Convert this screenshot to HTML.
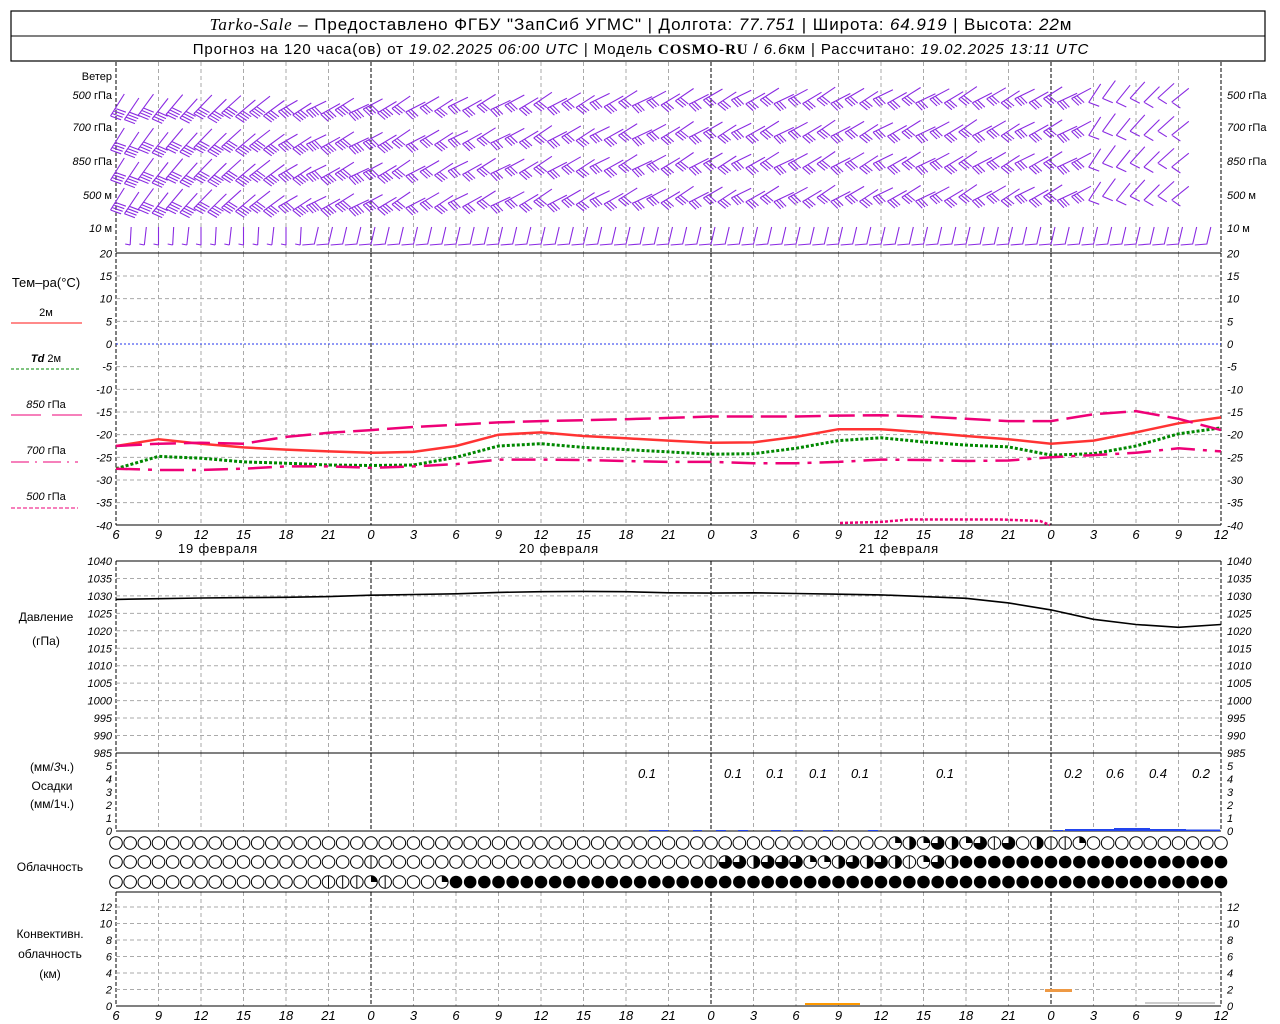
<!DOCTYPE html>
<html><head><meta charset="utf-8"><style>
html,body{margin:0;padding:0;background:#fff;width:1280px;height:1024px;overflow:hidden}
svg{display:block}
text{font-family:"Liberation Sans",sans-serif;fill:#000}
.n{font-style:italic;font-size:11px}
.l{font-size:11px}
</style></head><body>
<svg id="s" width="1280" height="1024" xmlns="http://www.w3.org/2000/svg">
<rect x="11" y="11" width="1254" height="50" fill="none" stroke="#000" stroke-width="1.2"/>
<line x1="11" y1="36" x2="1265" y2="36" stroke="#000"/>
<text x="641" y="30" text-anchor="middle" style="font-size:17px;letter-spacing:0.9px"><tspan style="font-family:'Liberation Serif',serif;font-style:italic">Tarko-Sale</tspan> – Предоставлено ФГБУ "ЗапСиб УГМС" | Долгота: <tspan font-style="italic">77.751</tspan> | Широта: <tspan font-style="italic">64.919</tspan> | Высота: <tspan font-style="italic">22</tspan>м</text>
<text x="641" y="54" text-anchor="middle" style="font-size:15px;letter-spacing:0.9px">Прогноз на 120 часа(ов) от <tspan font-style="italic">19.02.2025 06:00 UTC</tspan>  | Модель <tspan style="font-family:'Liberation Serif',serif;font-weight:bold">COSMO-RU</tspan> / <tspan font-style="italic">6.6</tspan>км | Рассчитано: <tspan font-style="italic">19.02.2025 13:11 UTC</tspan></text>
<g id="g"></g>
</svg>
<script>
var S=document.getElementById('g'),h='';
var X0=116,PX=14.1667,XR=1221;
function X(i){return X0+i*PX}
function ln(a,b,c,d,st){h+='<line x1="'+a+'" y1="'+b+'" x2="'+c+'" y2="'+d+'" '+st+'/>'}
function tx(x,y,t,c,a){h+='<text x="'+x+'" y="'+y+'" class="'+(c||'n')+'"'+(a?' text-anchor="'+a+'"':'')+'>'+t+'</text>'}
var G='stroke="#aaa" stroke-dasharray="4,3"',K='stroke="#000" stroke-dasharray="4,2"';
function vgrid(y1,y2){for(var i=3;i<78;i+=3){var x=X(i);var day=(i==18||i==42||i==66);ln(x,y1,x,y2,day?K:G)}
 ln(X0,y1,X0,y2,K);ln(XR,y1,XR,y2,K)}
vgrid(62,253);vgrid(253,525);vgrid(561,753);vgrid(753,831);vgrid(892,1006);
for(var t=20;t>=-40;t-=5){var y=344-t*4.533;if(t<20&&t>-40&&t!=0)ln(X0,y,XR,y,G);tx(112,y+4,t,'n','end');tx(1227,y+4,t)}
ln(X0,344,XR,344,'stroke="#2233ee" stroke-dasharray="2,2"');
for(var p=1040;p>=985;p-=5){var y=561+(1040-p)*3.49;if(p<1040&&p>985)ln(X0,y,XR,y,G);tx(112,y+4,p,'n','end');tx(1227,y+4,p)}
for(var k=0;k<=5;k++){var y=831-k*13;tx(112,y+4,k,'n','end');tx(1227,y+4,k)}
for(var k=0;k<=12;k+=2){var y=1006-k*8.25;if(k>0)ln(X0,y,XR,y,G);tx(112,y+4,k,'n','end');tx(1227,y+4,k)}
[253,561,753,831,892,1006,525].forEach(function(y){ln(X0,y,XR,y,'stroke="#000"')});
var hl=[6,9,12,15,18,21,0,3,6,9,12,15,18,21,0,3,6,9,12,15,18,21,0,3,6,9,12];
for(var j=0;j<hl.length;j++){var x=X(j*3);h+='<text x="'+x+'" y="539" class="n" style="font-size:13px" text-anchor="middle">'+hl[j]+'</text><text x="'+x+'" y="1020" class="n" style="font-size:13px" text-anchor="middle">'+hl[j]+'</text>'}
h+='<text x="218" y="553" style="font-size:13px;letter-spacing:0.8px" text-anchor="middle">19 февраля</text><text x="559" y="553" style="font-size:13px;letter-spacing:0.8px" text-anchor="middle">20 февраля</text><text x="899" y="553" style="font-size:13px;letter-spacing:0.8px" text-anchor="middle">21 февраля</text>';
tx(112,80,'Ветер','l','end');
var wl=[[99,'500','гПа'],[131,'700','гПа'],[165,'850','гПа'],[199,'500','м'],[232,'10 ','м']];
wl.forEach(function(w){h+='<text x="112" y="'+w[0]+'" class="l" text-anchor="end" font-size="10"><tspan font-style="italic">'+w[1]+'</tspan> '+w[2]+'</text><text x="1227" y="'+w[0]+'" class="l" font-size="10"><tspan font-style="italic">'+w[1]+'</tspan> '+w[2]+'</text>'});
h+='<text x="46" y="287" style="font-size:13px" text-anchor="middle">Тем–ра(°C)</text>';
h+='<text x="46" y="316" class="l" text-anchor="middle">2м</text>';ln(11,323,82,323,'stroke="#f44" stroke-width="1.2"');
h+='<text x="46" y="362" class="l" text-anchor="middle"><tspan font-style="italic" font-weight="bold">Td</tspan>  2м</text>';ln(11,369,80,369,'stroke="#080" stroke-dasharray="3,2"');
h+='<text x="46" y="408" class="l" text-anchor="middle"><tspan font-style="italic">850</tspan> гПа</text>';ln(11,415,41,415,'stroke="#e07"');ln(52,415,82,415,'stroke="#e07"');
h+='<text x="46" y="454" class="l" text-anchor="middle"><tspan font-style="italic">700</tspan> гПа</text>';ln(11,462,78,462,'stroke="#e07" stroke-dasharray="18,6,2,6"');
h+='<text x="46" y="500" class="l" text-anchor="middle"><tspan font-style="italic">500</tspan> гПа</text>';ln(11,508,78,508,'stroke="#e07" stroke-dasharray="4,2"');
h+='<text x="46" y="621" style="font-size:12px" text-anchor="middle">Давление</text><text x="46" y="645" style="font-size:12px" text-anchor="middle">(гПа)</text>';
h+='<text x="52" y="771" style="font-size:12px" text-anchor="middle">(мм/<tspan font-style="italic">3</tspan>ч.)</text><text x="52" y="790" style="font-size:12px" text-anchor="middle">Осадки</text><text x="52" y="808" style="font-size:12px" text-anchor="middle">(мм/1ч.)</text>';
h+='<text x="50" y="871" style="font-size:12px" text-anchor="middle">Облачность</text>';
h+='<text x="50" y="938" style="font-size:12px" text-anchor="middle">Конвективн.</text><text x="50" y="958" style="font-size:12px" text-anchor="middle">облачность</text><text x="50" y="978" style="font-size:12px" text-anchor="middle">(км)</text>';
function curve(vals,f,st){var d='';for(var j=0;j<vals.length;j++){d+=(j?'L':'M')+X(j*3).toFixed(1)+','+f(vals[j]).toFixed(1)}h+='<path d="'+d+'" fill="none" '+st+'/>'}
function ty(t){return 344-t*4.533}
curve([-22.5,-21,-22,-22.8,-23.3,-23.7,-24,-23.8,-22.5,-20,-19.5,-20.3,-20.8,-21.3,-21.8,-21.7,-20.5,-18.8,-18.8,-19.5,-20.3,-21,-22,-21.3,-19.5,-17.5,-16.2],ty,'stroke="#f33" stroke-width="2.5"');
curve([-27.5,-24.8,-25.2,-26,-26.3,-26.7,-26.8,-26.7,-25,-22.5,-22,-22.8,-23.3,-23.8,-24.3,-24.2,-23,-21.3,-20.7,-21.6,-22.3,-22.7,-24.5,-24.2,-22.5,-19.8,-18.5],ty,'stroke="#080" stroke-width="3" stroke-dasharray="3,2"');
curve([-22.5,-22,-21.8,-22,-20.5,-19.6,-19,-18.3,-17.8,-17.3,-17,-16.8,-16.6,-16.3,-16,-16,-16,-15.8,-15.7,-16,-16.5,-17,-17,-15.5,-14.8,-16.5,-19],ty,'stroke="#e07" stroke-width="2.5" stroke-dasharray="26,8"');
curve([-27.5,-27.8,-27.8,-27.5,-27,-27,-27.3,-27,-26.5,-25.5,-25.5,-25.6,-25.8,-26,-26,-26.3,-26.3,-26,-25.5,-25.6,-25.8,-25.7,-25,-24.5,-24,-23,-23.7],ty,'stroke="#e07" stroke-width="2.5" stroke-dasharray="24,8,4,8"');
h+='<path d="M840,523 L880,522 L910,519.5 L1000,519.5 L1040,521 L1050,525" fill="none" stroke="#e07" stroke-width="2.5" stroke-dasharray="3,2"/>';
function py(p){return 561+(1040-p)*3.49}
curve([1029,1029.2,1029.4,1029.5,1029.6,1029.8,1030.2,1030.4,1030.6,1031,1031.2,1031.3,1031.2,1030.9,1030.8,1030.9,1030.7,1030.5,1030.3,1029.8,1029.3,1028,1026,1023.3,1021.8,1021,1021.8],py,'stroke="#000" stroke-width="1.6"');
[[647,0.1],[733,0.1],[775,0.1],[818,0.1],[860,0.1],[945,0.1],[1073,0.2],[1115,0.6],[1158,0.4],[1201,0.2]].forEach(function(p){h+='<text x="'+p[0]+'" y="778" class="n" style="font-size:13px" text-anchor="middle">'+p[1]+'</text>'});
var pb=[[649,668,1],[693,702,1],[716,726,1],[738,748,1],[771,781,1],[793,803,1],[823,833,1],[868,878,1],[1053,1063,1],[1065,1095,2],[1095,1114,2],[1114,1130,3],[1130,1150,3],[1150,1170,2],[1170,1186,2],[1186,1200,1.5],[1200,1220,1.5]];
pb.forEach(function(b){h+='<rect x="'+b[0]+'" y="'+(831-b[2])+'" width="'+(b[1]-b[0])+'" height="'+b[2]+'" fill="#2244ee"/>'});
h+='<rect x="805" y="1003" width="55" height="2" fill="#f90"/><rect x="1045" y="989" width="27" height="3" fill="#e94"/><line x1="1145" y1="1003" x2="1215" y2="1003" stroke="#999"/>';
function cloud(x,y,t){var r=6.3;
 if(t=='f'){h+='<circle cx="'+x+'" cy="'+y+'" r="'+r+'" fill="#000"/>';return}
 h+='<circle cx="'+x+'" cy="'+y+'" r="'+r+'" fill="#fff" stroke="#000" stroke-width="1"/>';
 if(t=='l'){ln(x,y-r,x,y+r,'stroke="#000"')}
 if(t=='e'){ln(x-r,y,x+r,y,'stroke="#000"');h+='<path d="M'+x+','+(y-r)+'A'+r+','+r+' 0 0 1 '+x+','+(y+r)+'Z" fill="#000"/>'}
 if(t=='q')h+='<path d="M'+x+','+y+'L'+x+','+(y-r)+'A'+r+','+r+' 0 0 1 '+(x+r)+','+y+'Z" fill="#000"/>';
 if(t=='h')h+='<path d="M'+x+','+(y-r)+'A'+r+','+r+' 0 0 1 '+x+','+(y+r)+'Z" fill="#000"/>';
 if(t=='t')h+='<path d="M'+x+','+y+'L'+x+','+(y-r)+'A'+r+','+r+' 0 1 1 '+(x-r)+','+y+'Z" fill="#000"/>';
}
function rep(c,n){return Array(n+1).join(c)}
var r1=rep('o',55)+'qhqthqtltohllqooooooo'.slice(0,24);r1=(r1+rep('o',79)).slice(0,79);
var r2=rep('o',18)+'l'+rep('o',23)+'ltthtttqqhththlqth'+rep('f',19);r2=(r2+rep('f',79)).slice(0,79);
var r3=rep('o',15)+'lllqloooq'+rep('f',55);r3=(r3+rep('f',79)).slice(0,79);
for(var i=0;i<79;i++){var x=X(i);cloud(x,843,r1[i]);cloud(x,862,r2[i]);cloud(x,882,r3[i])}
var P='stroke="#8a2be2" stroke-width="1.1" fill="none"';
function lerp(a,b,t){return a+(b-a)*t}
var rows=[[113,97,95],[147,130,128],[177,161,160],[207,195,193]];
rows.forEach(function(rw,ri){
 var d='';
 for(var i=0;i<76;i++){var x=X(i);
  var yb=i<42?lerp(rw[0],rw[1],i/42):lerp(rw[1],rw[2],(i-42)/34);
  yb+=((i%2)?1:-1)*2;
  var a=(i<12?58-i*2:34-((i*7)%10))*Math.PI/180;
  if(i>68){a=(60-(i-68)*3)*Math.PI/180}
  var L=i<12?26:22,dx=Math.cos(a),dy=-Math.sin(a);
  var x0=x-L*dx*0.4,y0=yb+5;
  d+='M'+x0.toFixed(1)+','+y0.toFixed(1)+'l'+(L*dx).toFixed(1)+','+(L*dy).toFixed(1);
  var nf=i>68?1:(i<20?4:3);
  for(var k=0;k<nf;k++){var fx=x0+dx*k*3,fy=y0+dy*k*3;d+='M'+fx.toFixed(1)+','+fy.toFixed(1)+'l'+(9*Math.sin(a)+3).toFixed(1)+','+(9*Math.cos(a)-1).toFixed(1)}
 }
 h+='<path d="'+d+'" '+P+'/>';
});
var d='';
for(var i=1;i<78;i++){var x=X(i);
 if(i<14){d+='M'+x+',245l'+(i%3)+',-18M'+x+',245l-5,-1'}
 else{d+='M'+(x+4)+',227L'+x+',244l-12,1'}}
h+='<path d="'+d+'" '+P+'/>';
S.innerHTML=h;
</script>
</body></html>
